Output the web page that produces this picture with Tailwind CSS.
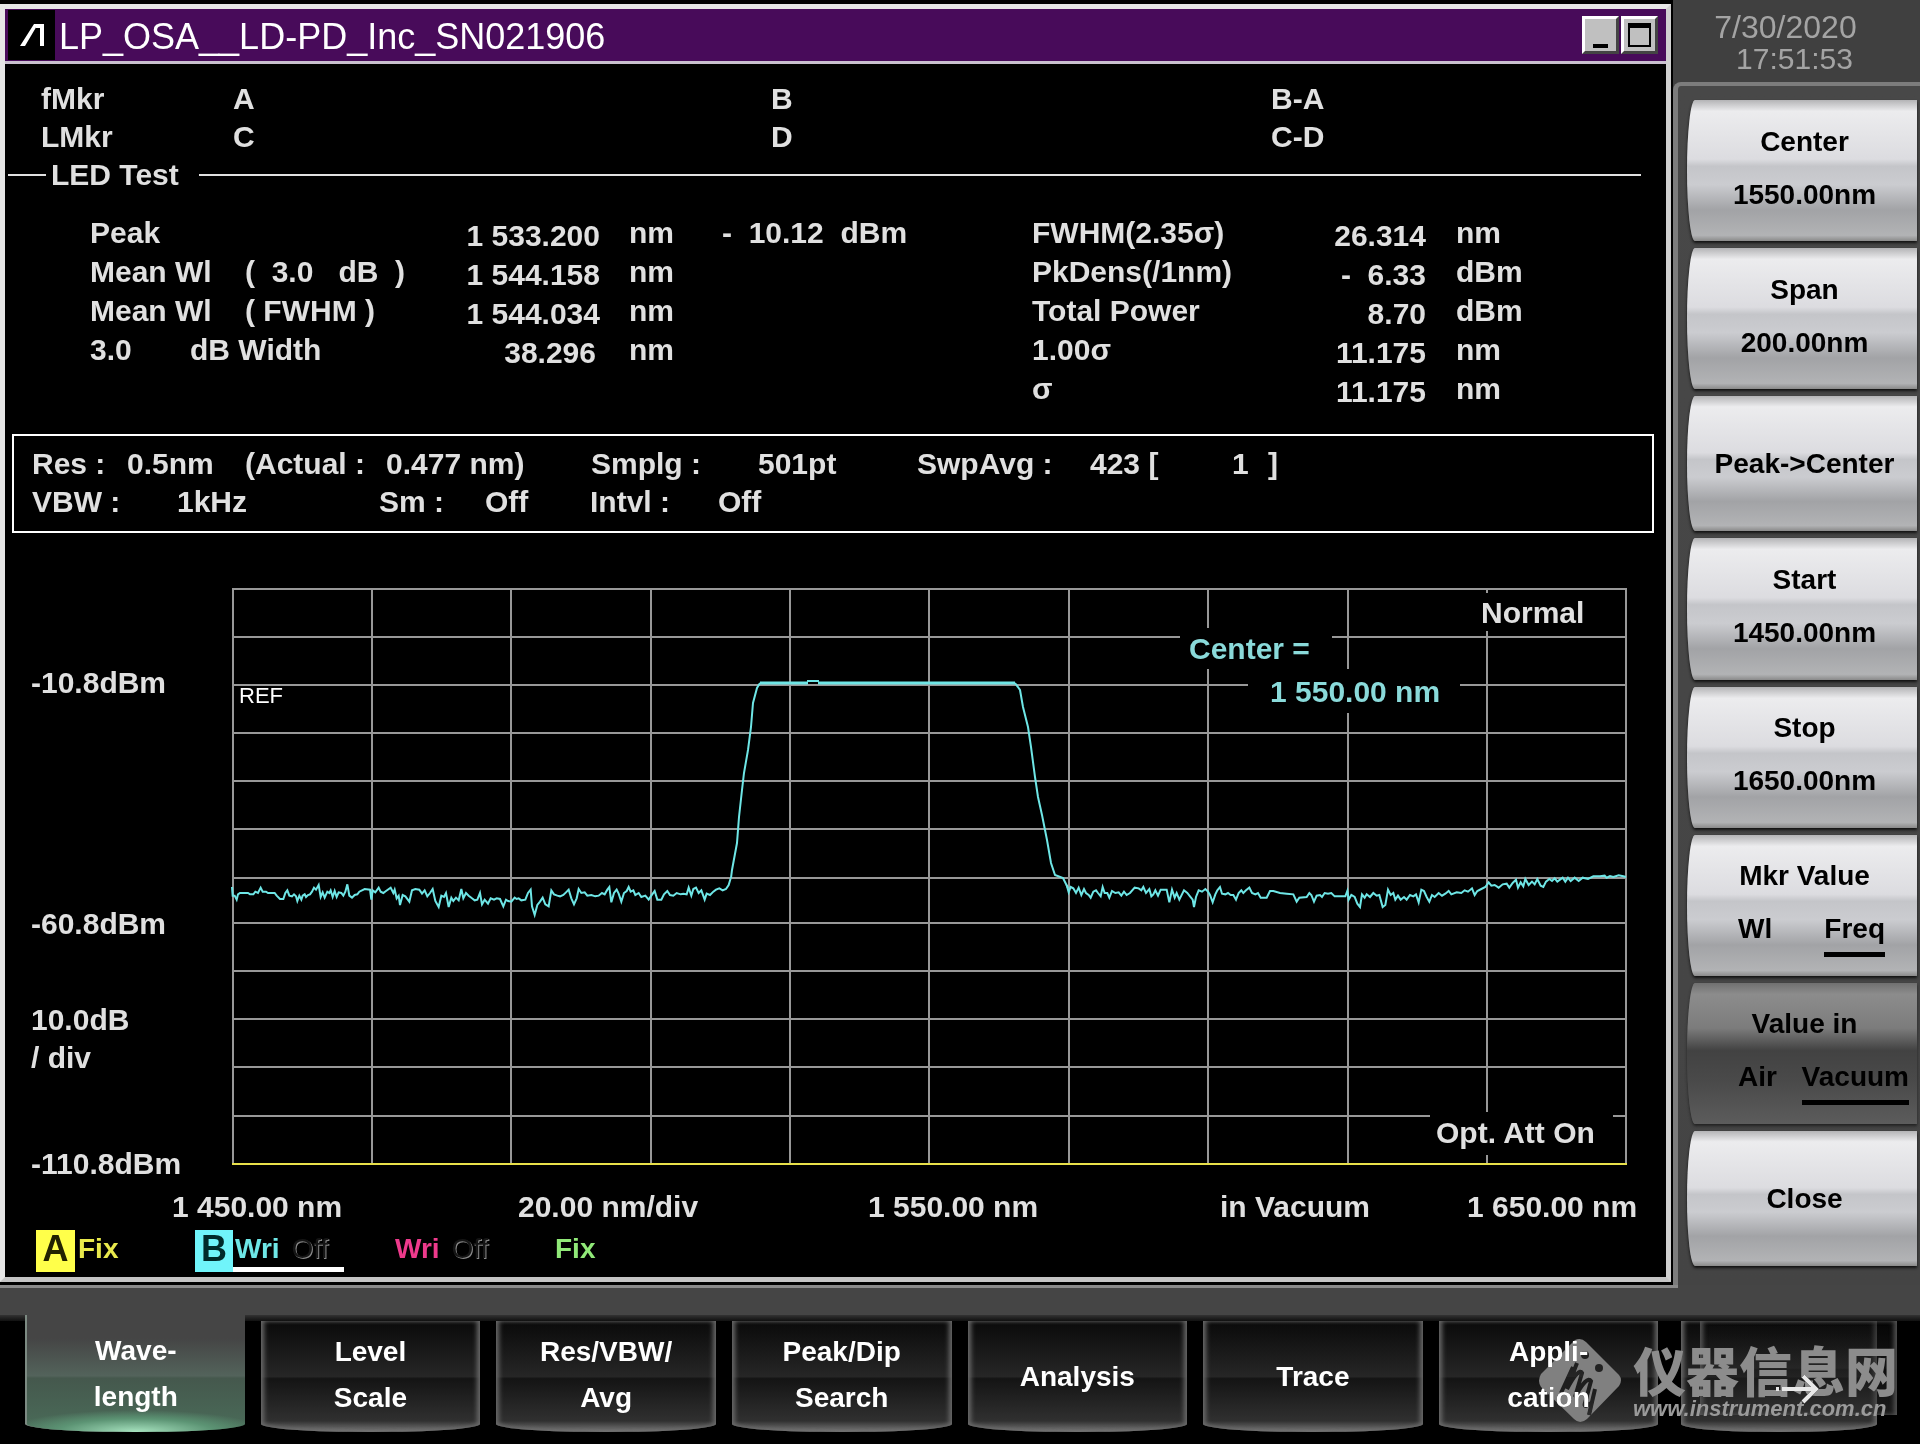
<!DOCTYPE html>
<html lang="en">
<head>
<meta charset="utf-8">
<title>Optical Spectrum Analyzer</title>
<script src="https://cdn.jsdelivr.net/npm/@tailwindcss/browser@4"></script>
</head>
<body class="flex min-h-screen flex-col overflow-x-hidden bg-black font-['Liberation_Sans',Arial,sans-serif] text-[28px] leading-[38px] text-[#e0e0e0]">

<div class="flex bg-[#444]">
  <!-- Measurement window -->
  <div class="flex min-w-0 flex-1 border-r-2 border-b-3 border-black bg-black pt-1">
  <main class="flex min-w-0 flex-1 flex-col border-5 border-[#e6e6e6] border-r-[#d0d0d0] border-b-[#c4c4c4] bg-black text-[30px] font-bold">
    <header class="flex h-[55px] items-center border-b-3 border-[#c9c0cf] bg-[#480b5a] pr-2">
      <svg class="ml-[3px] h-[50px] w-[47px] bg-black" viewBox="0 0 47 50" aria-hidden="true">
        <path d="M12 36 L26 14 L30 14 L17 36 Z M28 14 H36 V36 H32 V18 H28 Z" fill="#fff"/>
      </svg>
      <h1 class="ml-1 flex-1 pt-1 text-[36px] font-normal text-white">LP_OSA__LD-PD_Inc_SN021906</h1>
      <div class="flex gap-[2px]">
        <button type="button" aria-label="Minimize" class="flex h-[38px] w-[37px] items-end justify-center border-3 border-t-white border-l-white border-r-[#444] border-b-[#444] bg-[#c0c0c0] pb-[3px]"><span class="h-1 w-[15px] bg-black"></span></button>
        <button type="button" aria-label="Maximize" class="flex h-[38px] w-[37px] items-center justify-center border-3 border-t-white border-l-white border-r-[#444] border-b-[#444] bg-[#c0c0c0]"><span class="h-6 w-[23px] border-2 border-t-5 border-black"></span></button>
      </div>
    </header>

    <!-- Markers -->
    <div class="grid grid-cols-[192fr_538fr_500fr_395fr] pt-4 pl-9">
      <span>fMkr</span><span>A</span><span>B</span><span>B-A</span>
      <span>LMkr</span><span>C</span><span>D</span><span>C-D</span>
    </div>

    <!-- Analysis result -->
    <div class="flex items-center pr-[25px] pl-[3px]">
      <span class="h-[2px] w-[38px] bg-[#e0e0e0]"></span>
      <h2 class="ml-[5px]">LED Test</h2>
      <span class="ml-5 h-[2px] flex-1 bg-[#e0e0e0]"></span>
    </div>
    <div class="grid grid-cols-[942fr_634fr] pt-5 pl-[85px]">
      <table class="w-[760px] table-fixed border-collapse self-start whitespace-pre [&_td]:h-[39px] [&_td]:p-0 [&_td]:align-top [&_th]:p-0 [&_th]:text-left [&_th]:align-top">
        <colgroup><col class="w-[360px]"><col class="w-[150px]"><col class="w-[122px]"><col class="w-[128px]"></colgroup>
        <tbody>
          <tr><th scope="row">Peak</th><td class="pt-1! text-right leading-[35px]">1 533.200</td><td class="pl-[29px]!">nm</td><td>-  10.12  dBm</td></tr>
          <tr><th scope="row">Mean Wl    (  3.0   dB  )</th><td class="pt-1! text-right leading-[35px]">1 544.158</td><td class="pl-[29px]!">nm</td><td></td></tr>
          <tr><th scope="row">Mean Wl    ( FWHM )</th><td class="pt-1! text-right leading-[35px]">1 544.034</td><td class="pl-[29px]!">nm</td><td></td></tr>
          <tr><th scope="row">3.0       dB Width</th><td class="pt-1! pr-1! text-right leading-[35px]">38.296</td><td class="pl-[29px]!">nm</td><td></td></tr>
        </tbody>
      </table>
      <table class="w-[500px] table-fixed border-collapse self-start whitespace-pre [&_td]:h-[39px] [&_td]:p-0 [&_td]:align-top [&_th]:p-0 [&_th]:text-left [&_th]:align-top">
        <colgroup><col class="w-[250px]"><col class="w-[148px]"><col class="w-[102px]"></colgroup>
        <tbody>
          <tr><th scope="row">FWHM(2.35σ)</th><td class="pt-1! pr-1! text-right leading-[35px]">26.314</td><td class="pl-[26px]!">nm</td></tr>
          <tr><th scope="row">PkDens(/1nm)</th><td class="pt-1! pr-1! text-right leading-[35px]">-  6.33</td><td class="pl-[26px]!">dBm</td></tr>
          <tr><th scope="row">Total Power</th><td class="pt-1! pr-1! text-right leading-[35px]">8.70</td><td class="pl-[26px]!">dBm</td></tr>
          <tr><th scope="row">1.00σ</th><td class="pt-1! pr-1! text-right leading-[35px]">11.175</td><td class="pl-[26px]!">nm</td></tr>
          <tr><th scope="row">σ</th><td class="pt-1! pr-1! text-right leading-[35px]">11.175</td><td class="pl-[26px]!">nm</td></tr>
        </tbody>
      </table>
    </div>

    <!-- Sweep conditions -->
    <section class="mt-[25px] mr-[12px] ml-[7px] h-[99px] border-2 border-white pt-[9px] pl-[18px] whitespace-nowrap">
      <div class="flex">
        <span class="w-[95px]">Res :</span><span class="w-[118px]">0.5nm</span><span class="w-[141px]">(Actual :</span><span class="w-[205px]">0.477 nm)</span><span class="w-[167px]">Smplg :</span><span class="w-[159px]">501pt</span><span class="w-[173px]">SwpAvg :</span><span class="w-[142px]">423 [</span><span class="w-9">1</span><span>]</span>
      </div>
      <div class="flex">
        <span class="w-[145px]">VBW :</span><span class="w-[202px]">1kHz</span><span class="w-[106px]">Sm :</span><span class="w-[105px]">Off</span><span class="w-[128px]">Intvl :</span><span>Off</span>
      </div>
    </section>

    <!-- Spectrum plot -->
    <section class="mt-14 flex pr-[39px]">
      <div class="flex w-[227px] shrink-0 flex-col pt-[75px] pl-[26px]">
        <span>-10.8dBm</span>
        <span class="mt-[203px]">-60.8dBm</span>
        <span class="mt-[58px]">10.0dB</span>
        <span>/ div</span>
        <span class="-mb-5 mt-[68px]">-110.8dBm</span>
      </div>
      <div class="relative min-w-0 flex-1">
        <svg class="block h-[576px] w-full overflow-visible" viewBox="0 0 1395 576" preserveAspectRatio="none" fill="none" aria-label="Level against wavelength">
          <path stroke="#989898" stroke-width="2" d="M0 0H1395M0 48H1395M0 96H1395M0 144H1395M0 192H1395M0 240H1395M0 289H1395M0 334H1395M0 382H1395M0 430H1395M0 478H1395M0 527H1395M1 0V575M140 0V575M279 0V575M419 0V575M558 0V575M697 0V575M837 0V575M976 0V575M1116 0V575M1255 0V575M1394 0V575"/>
          <path stroke="#e8e04a" stroke-width="2" d="M0 575H1395"/>
          <g stroke="#6ee6e6" stroke-width="2">
            <polyline transform="translate(-4 276) scale(.33333)" vector-effect="non-scaling-stroke" points="12,66 14,92 20,92 26,104 30,88 36,84 60,84 66,88 76,88 82,80 90,84 98,68 104,80 114,80 120,84 140,84 146,92 156,102 166,102 172,84 178,76 184,92 192,94 198,88 204,94 208,108 214,92 220,104 224,92 230,88 234,96 240,90 246,88 252,80 258,68 264,74 272,60 278,96 284,82 290,98 298,80 304,84 308,76 314,96 320,78 326,96 332,82 340,84 346,92 352,80 358,58 364,92 372,98 380,90 388,88 394,80 402,76 410,72 426,74 430,104 434,76 442,82 452,68 458,80 466,84 474,78 488,68 496,84 500,74 506,100 512,92 516,120 524,90 532,94 544,110 552,76 562,72 574,74 582,86 590,76 598,94 606,84 614,72 622,108 632,126 640,92 648,96 654,84 662,126 670,98 676,108 684,98 692,106 700,72 706,100 714,84 722,92 732,100 740,106 748,104 756,84 762,118 770,104 780,116 788,100 798,104 806,100 816,102 826,124 834,104 840,108 850,110 860,98 866,102 872,100 880,106 892,104 900,84 908,74 912,124 920,150 928,120 936,110 944,98 952,118 962,124 970,76 978,88 988,92 996,94 1006,90 1014,82 1022,74 1030,100 1038,118 1046,100 1052,72 1060,84 1070,82 1078,92 1090,90 1102,94 1112,92 1122,84 1130,88 1138,74 1144,66 1150,112 1158,84 1166,74 1172,86 1180,110 1188,84 1196,78 1202,66 1208,80 1216,76 1222,90 1232,84 1240,96 1252,92 1262,104 1270,92 1280,78 1288,104 1300,104 1308,88 1318,78 1326,90 1336,92 1346,84 1358,88 1366,86 1376,88 1382,68 1390,92 1396,72 1404,68 1412,84 1420,76 1430,104 1436,86 1446,90 1456,80 1464,74 1474,70 1484,76 1494,72 1502,60 1508,40"/>
            <path d="M499 289L500 281L505 254L507 228L510 201L512 184L516 161L519 138L521 114L525 99L528 94"/>
            <path stroke-width="3" d="M528 94H576M586 94H783"/>
            <path d="M575 92H587M783 94L788 101L791 118L796 138L799 158L803 188L806 208L810 226L815 251L819 274L823 286L831 289L836 299"/>
            <polyline transform="translate(808 276) scale(.33333)" vector-effect="non-scaling-stroke" points="80,60 86,82 92,66 100,70 108,84 116,68 124,90 132,72 138,84 146,90 152,98 160,80 168,76 174,84 182,94 188,66 194,84 202,84 208,98 216,78 226,84 236,82 244,92 252,80 260,90 270,84 284,68 296,70 304,76 310,66 318,84 328,72 334,94 340,88 346,76 354,92 362,74 380,74 388,112 396,74 404,98 410,84 418,104 424,92 432,76 442,84 450,94 458,104 462,126 468,96 476,76 486,80 496,72 504,80 510,90 518,112 526,88 532,76 540,66 546,86 556,88 564,84 572,90 580,90 588,104 596,84 604,76 610,84 618,76 628,68 636,84 646,88 654,84 662,98 680,98 690,78 700,78 720,84 740,86 760,88 770,110 778,98 800,96 808,84 814,90 822,110 830,92 840,90 846,96 854,84 864,86 874,84 884,94 916,94 922,78 926,104 934,90 944,96 952,116 960,126 966,88 974,98 980,88 990,96 1000,84 1010,92 1018,90 1028,126 1036,120 1044,74 1052,90 1060,84 1066,104 1074,92 1082,104 1092,96 1100,104 1110,90 1120,94 1128,88 1136,112 1144,74 1152,78 1160,96 1168,110 1176,90 1184,96 1196,84 1206,92 1216,86 1226,78 1234,88 1250,82 1264,84 1274,76 1284,80 1296,70 1304,90 1312,78 1324,72 1336,66 1346,52 1354,62 1364,60 1376,68 1388,58 1400,56 1408,68 1418,54 1428,44 1434,68 1442,52 1450,64 1456,42 1466,60 1476,50 1484,58 1492,42 1502,62 1510,66 1518,50 1528,42 1536,48 1544,40 1552,50 1560,44 1568,38 1576,50 1584,38 1592,48 1604,38 1616,48 1628,38 1644,42 1660,34 1680,34 1694,32 1700,38 1710,33 1720,36 1736,31 1750,34 1758,36"/>
          </g>
        </svg>
        <span class="absolute top-[95px] left-[7px] text-[22px] leading-6 font-normal text-white">REF</span>
        <span class="absolute top-1 right-[30px] h-[38px] w-[122px] bg-black pl-[6px] leading-10">Normal</span>
        <span class="absolute top-[39px] right-[295px] h-[41px] w-[152px] bg-black pl-[9px] leading-[41px] text-[#8adada]">Center =</span>
        <span class="absolute top-20 right-[167px] h-11 w-[212px] bg-black pl-[22px] leading-[46px] text-[#8adada]">1 550.00 nm</span>
        <span class="absolute top-[523px] right-[14px] h-[43px] w-[183px] bg-black pl-[6px] leading-[41px]">Opt. Att On</span>
      </div>
    </section>
    <div class="mt-[23px] grid grid-cols-[346fr_350fr_352fr_247fr_199fr] pl-[167px] whitespace-nowrap">
      <span>1 450.00 nm</span><span>20.00 nm/div</span><span>1 550.00 nm</span><span>in Vacuum</span><span>1 650.00 nm</span>
    </div>

    <!-- Traces -->
    <div class="mt-1 flex pb-[5px] pl-[31px] text-[28px]">
      <div class="flex w-[159px]">
        <span class="w-[39px] bg-[#ffff4a] text-center text-[36px] text-[#222200]">A</span><span class="ml-[3px] text-[#e8e84c]">Fix</span>
      </div>
      <div class="flex w-[200px]">
        <span class="w-[38px] bg-[#70f4fa] text-center text-[36px] text-[#002a2a]">B</span>
        <span class="w-[111px] border-b-5 border-white pl-[2px] leading-[37px] text-[#6ee6e6]">Wri <span class="pl-1 font-normal text-[#151515] [text-shadow:1px_1px_0_#888]">Off</span></span>
      </div>
      <div class="w-[160px] text-[#ee3a8c]">Wri <span class="pl-1 font-normal text-[#151515] [text-shadow:1px_1px_0_#888]">Off</span></div>
      <div class="text-[#90e878]">Fix</div>
    </div>
  </main>
  </div>

  <!-- Soft keys -->
  <aside class="flex w-[247px] shrink-0 flex-col bg-[#404040] pt-2 font-bold text-black">
    <div class="h-[74px] pt-1 text-center text-[30px] leading-[31px] font-normal text-[#a4a4a4]">
      <div class="pr-[22px] text-[32px]">7/30/2020</div>
      <div class="pr-1">17:51:53</div>
    </div>
    <nav aria-label="Wavelength functions" class="flex flex-1 flex-col gap-[7px] rounded-tl-lg border-t-4 border-l-5 border-[#7c7c7c] bg-gradient-to-b from-[#484848] to-[#444] pt-[14px] pr-[3px] pb-[19px] pl-[9px]">
      <button type="button" class="flex-1 bg-[linear-gradient(#b4b4b6,#ececee_8%,#dcdce0_42%,#c4c5c9_47%,#cbccd0_60%,#a2a3a6_78%,#b2b3b5_96%,#8a8a8a)] pb-[6px] pl-[5px] leading-[53px] shadow-[0_2px_3px_#111] [border-radius:8px_0_0_8px/50%_0_0_50%]">Center<br>1550.00nm</button>
      <button type="button" class="flex-1 bg-[linear-gradient(#b4b4b6,#ececee_8%,#dcdce0_42%,#c4c5c9_47%,#cbccd0_60%,#a2a3a6_78%,#b2b3b5_96%,#8a8a8a)] pb-[6px] pl-[5px] leading-[53px] shadow-[0_2px_3px_#111] [border-radius:8px_0_0_8px/50%_0_0_50%]">Span<br>200.00nm</button>
      <button type="button" class="flex-1 bg-[linear-gradient(#b4b4b6,#ececee_8%,#dcdce0_42%,#c4c5c9_47%,#cbccd0_60%,#a2a3a6_78%,#b2b3b5_96%,#8a8a8a)] pl-[5px] leading-[53px] shadow-[0_2px_3px_#111] [border-radius:8px_0_0_8px/50%_0_0_50%]">Peak-&gt;Center</button>
      <button type="button" class="flex-1 bg-[linear-gradient(#b4b4b6,#ececee_8%,#dcdce0_42%,#c4c5c9_47%,#cbccd0_60%,#a2a3a6_78%,#b2b3b5_96%,#8a8a8a)] pb-[6px] pl-[5px] leading-[53px] shadow-[0_2px_3px_#111] [border-radius:8px_0_0_8px/50%_0_0_50%]">Start<br>1450.00nm</button>
      <button type="button" class="flex-1 bg-[linear-gradient(#b4b4b6,#ececee_8%,#dcdce0_42%,#c4c5c9_47%,#cbccd0_60%,#a2a3a6_78%,#b2b3b5_96%,#8a8a8a)] pb-[6px] pl-[5px] leading-[53px] shadow-[0_2px_3px_#111] [border-radius:8px_0_0_8px/50%_0_0_50%]">Stop<br>1650.00nm</button>
      <button type="button" class="flex-1 bg-[linear-gradient(#b4b4b6,#ececee_8%,#dcdce0_42%,#c4c5c9_47%,#cbccd0_60%,#a2a3a6_78%,#b2b3b5_96%,#8a8a8a)] pb-[6px] pl-[5px] leading-[53px] shadow-[0_2px_3px_#111] [border-radius:8px_0_0_8px/50%_0_0_50%]">Mkr Value<span class="flex h-[53px] justify-between pr-8 pl-[46px]"><span>Wl</span><span class="h-[55px] border-b-5 border-black">Freq</span></span></button>
      <button type="button" class="flex-1 bg-[linear-gradient(#707070,#8c8c8c_8%,#7c7c7c_32%,#424242_48%,#4a4a4a_70%,#5c5c5c)] pb-[6px] pl-[5px] leading-[53px] shadow-[0_2px_3px_#222] [border-radius:8px_0_0_8px/50%_0_0_50%]">Value in<span class="flex h-[53px] justify-between pr-2 pl-[46px]"><span>Air</span><span class="h-[55px] border-b-5 border-black">Vacuum</span></span></button>
      <button type="button" class="flex-1 bg-[linear-gradient(#b4b4b6,#ececee_8%,#dcdce0_42%,#c4c5c9_47%,#cbccd0_60%,#a2a3a6_78%,#b2b3b5_96%,#8a8a8a)] pl-[5px] leading-[53px] shadow-[0_2px_3px_#111] [border-radius:8px_0_0_8px/50%_0_0_50%]">Close</button>
    </nav>
  </aside>
</div>

<div class="flex bg-[#454545]">
  <div class="h-[30px] flex-1 border-t-3 border-[#8a8a8a]"></div>
  <div class="w-[242px]"></div>
</div>

<!-- Function tabs -->
<nav aria-label="Functions" class="relative grid h-[117px] grid-cols-8 gap-4 bg-black pr-[26px] pl-[25px] font-bold text-white">
  <div class="absolute inset-x-0 top-0 h-[6px] bg-gradient-to-b from-[#333] to-[#111]"></div>
  <button type="button" aria-current="page" class="relative border-l-2 border-[#7c8a82] bg-[radial-gradient(60%_22px_at_50%_100%,#a8e4c0,#5c9474_60%,transparent),linear-gradient(#454545_20%,#53635b_52%,#45584d_54%,#4a6c59)] leading-[46px] [border-radius:0_0_50%_50%/0_0_8px_8px]">Wave-<br>length</button>
  <button type="button" class="mt-[3px] border-t-3 border-[#111] bg-[linear-gradient(#0a0a0a,#262626_50%,#141414_52%,#303030_90%,#7c7c7c)] pb-1 leading-[46px] shadow-[inset_4px_0_5px_-1px_#6a6a6a,inset_-4px_0_5px_-1px_#6a6a6a] [border-radius:0_0_50%_50%/0_0_8px_8px]">Level<br>Scale</button>
  <button type="button" class="mt-[3px] border-t-3 border-[#111] bg-[linear-gradient(#0a0a0a,#262626_50%,#141414_52%,#303030_90%,#7c7c7c)] pb-1 leading-[46px] shadow-[inset_4px_0_5px_-1px_#6a6a6a,inset_-4px_0_5px_-1px_#6a6a6a] [border-radius:0_0_50%_50%/0_0_8px_8px]">Res/VBW/<br>Avg</button>
  <button type="button" class="mt-[3px] border-t-3 border-[#111] bg-[linear-gradient(#0a0a0a,#262626_50%,#141414_52%,#303030_90%,#7c7c7c)] pb-1 leading-[46px] shadow-[inset_4px_0_5px_-1px_#6a6a6a,inset_-4px_0_5px_-1px_#6a6a6a] [border-radius:0_0_50%_50%/0_0_8px_8px]">Peak/Dip<br>Search</button>
  <button type="button" class="mt-[3px] border-t-3 border-[#111] bg-[linear-gradient(#0a0a0a,#262626_50%,#141414_52%,#303030_90%,#7c7c7c)] leading-[46px] shadow-[inset_4px_0_5px_-1px_#6a6a6a,inset_-4px_0_5px_-1px_#6a6a6a] [border-radius:0_0_50%_50%/0_0_8px_8px]">Analysis</button>
  <button type="button" class="mt-[3px] border-t-3 border-[#111] bg-[linear-gradient(#0a0a0a,#262626_50%,#141414_52%,#303030_90%,#7c7c7c)] leading-[46px] shadow-[inset_4px_0_5px_-1px_#6a6a6a,inset_-4px_0_5px_-1px_#6a6a6a] [border-radius:0_0_50%_50%/0_0_8px_8px]">Trace</button>
  <button type="button" class="mt-[3px] border-t-3 border-[#111] bg-[linear-gradient(#0a0a0a,#262626_50%,#141414_52%,#303030_90%,#7c7c7c)] pb-1 leading-[46px] shadow-[inset_4px_0_5px_-1px_#6a6a6a,inset_-4px_0_5px_-1px_#6a6a6a] [border-radius:0_0_50%_50%/0_0_8px_8px]">Appli-<br>cation</button>
  <button type="button" aria-label="Next page" class="relative mt-[6px]">
    <span class="absolute inset-y-0 right-[17px] left-[7px] bg-[linear-gradient(#0a0a0a,#262626_50%,#141414_52%,#303030_90%,#7c7c7c)] shadow-[inset_4px_0_5px_-1px_#6a6a6a,inset_-4px_0_5px_-1px_#6a6a6a] [border-radius:0_0_50%_50%/0_0_8px_8px]"></span>
    <span class="absolute top-0 -right-[3px] bottom-[17px] left-[26px] bg-[linear-gradient(#0a0a0a80,#2a2a2a80_50%,#1a1a1a80_52%,#38383880)] shadow-[inset_4px_0_5px_-1px_#555,inset_-4px_0_5px_-1px_#555]"></span>
    <svg class="absolute top-[52px] left-[99px] h-8 w-12" viewBox="0 0 48 32" fill="none" stroke="#e8e8e8" stroke-width="4" aria-hidden="true"><path d="M3 16H6M9 16H43M30 3L43 16L30 29"/></svg>
  </button>

  <!-- Site watermark laid over the tabs -->
  <div class="pointer-events-none absolute top-[22px] right-[22px] flex items-center gap-[10px] text-[#8c8c8c] mix-blend-lighten">
    <svg class="h-[88px] w-[86px]" viewBox="0 0 86 88" aria-hidden="true">
      <path d="M38 3Q44 0 49 5L82 38Q86 43 82 49L50 82Q43 88 37 82L4 50Q0 44 4 37Z" fill="#808080"/>
      <path d="M24 56L36 30M40 26L30 52Q42 30 45 36L38 60Q50 38 54 44L48 66Q46 72 54 66M58 52L52 78" fill="none" stroke="#1e1e1e" stroke-width="4"/>
      <circle cx="48" cy="18" r="4" fill="#222"/><circle cx="62" cy="31" r="4" fill="#222"/>
    </svg>
    <div>
      <div class="font-['Noto_Sans_CJK_SC',sans-serif] text-[53px] leading-[56px] font-black">仪器信息网</div>
      <div class="text-[22px] leading-6 text-[#9a9a9a] italic">www.instrument.com.cn</div>
    </div>
  </div>
</nav>

</body>
</html>
